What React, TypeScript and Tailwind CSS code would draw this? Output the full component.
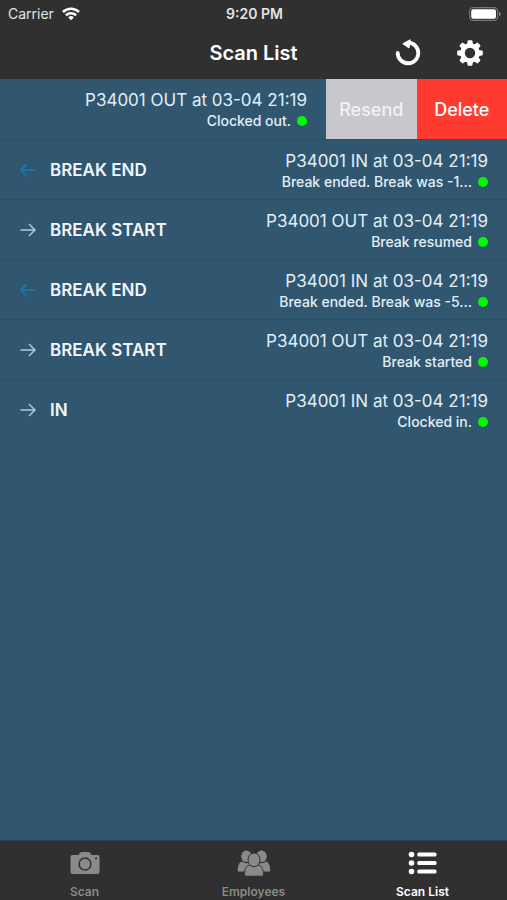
import clsx from 'clsx';

interface ScanEntry {
  id: number;
  label: string;
  direction: 'in' | 'out';
  title: string;
  status: string;
}

const scans: ScanEntry[] = [
  { id: 5, label: 'BREAK END', direction: 'in', title: 'P34001 IN at 03-04 21:19', status: 'Break ended. Break was -1...' },
  { id: 4, label: 'BREAK START', direction: 'out', title: 'P34001 OUT at 03-04 21:19', status: 'Break resumed' },
  { id: 3, label: 'BREAK END', direction: 'in', title: 'P34001 IN at 03-04 21:19', status: 'Break ended. Break was -5...' },
  { id: 2, label: 'BREAK START', direction: 'out', title: 'P34001 OUT at 03-04 21:19', status: 'Break started' },
  { id: 1, label: 'IN', direction: 'out', title: 'P34001 IN at 03-04 21:19', status: 'Clocked in.' },
];

const teeth = [0, 45, 90, 135, 180, 225, 270, 315];

function WifiIcon() {
  return (
    <svg width="18" height="14" viewBox="0 0 18 14" fill="none" stroke="#fff" strokeWidth="2.5" aria-hidden="true">
      <path d="M1 5a11.3 11.3 0 0 1 16 0" />
      <path d="M3.9 8.3a7.2 7.2 0 0 1 10.2 0" />
      <path d="M9 13.2 6.2 10.4a4 4 0 0 1 5.6 0z" fill="#fff" stroke="none" />
    </svg>
  );
}

function BatteryIcon() {
  return (
    <svg width="32" height="14" viewBox="0 0 32 14" aria-hidden="true">
      <rect x="0.6" y="0.6" width="28" height="12.8" rx="3.6" fill="none" stroke="#777" strokeWidth="1.1" />
      <rect x="2.2" y="2.2" width="24.8" height="9.6" rx="2" fill="#fff" />
      <path d="M30 4.8c1.2.5 1.6 1.2 1.6 2.2s-.4 1.7-1.6 2.2z" fill="#8b8b8b" />
    </svg>
  );
}

function ReloadIcon() {
  return (
    <svg width="28" height="28" viewBox="0 0 28 28" aria-hidden="true">
      <path d="M3.7 14A10.3 10.3 0 1 0 15 3.7" fill="none" stroke="#fff" strokeWidth="3.8" strokeLinecap="round" />
      <path d="M8.8 4.7 16.2.8 15 9z" fill="#fff" stroke="#fff" strokeWidth="1" strokeLinejoin="round" />
    </svg>
  );
}

function GearIcon() {
  return (
    <svg width="28" height="28" viewBox="0 0 28 28" aria-hidden="true">
      <circle cx="14" cy="14" r="7.5" fill="none" stroke="#fff" strokeWidth="4.6" />
      {teeth.map((angle) => (
        <path
          key={angle}
          d="M11 5.5 11.5 2.2q.1-1 1-1h3q.9 0 1 1l.5 3.3z"
          fill="#fff"
          transform={`rotate(${angle} 14 14)`}
        />
      ))}
    </svg>
  );
}

function CameraIcon() {
  return (
    <svg width="30" height="24" viewBox="0 0 30 24" aria-hidden="true">
      <path
        d="M2.5 4h6l1.6-2.2Q10.700 1 11.700 1h6.600q1 0 1.600.8L21.500 4h6q2 0 2 2v15q0 2-2 2h-25q-2 0-2-2V6q0-2 2-2z"
        fill="currentColor"
      />
      <circle cx="15" cy="13" r="5.9" fill="none" stroke="#303030" strokeWidth="1.5" />
      <circle cx="26" cy="7.4" r="1.1" fill="#303030" />
    </svg>
  );
}

function PeopleIcon() {
  return (
    <svg width="34" height="26" viewBox="0 0 34 26" fill="currentColor" aria-hidden="true">
      <ellipse cx="9.4" cy="6.3" rx="5.2" ry="5.8" />
      <ellipse cx="24.6" cy="6.3" rx="5.2" ry="5.8" />
      <path d="M.8 21.500c0-6 1.200-8.700 4.200-9.900 2.500 2 5.500 2 8 .9v9z" />
      <path d="M33.200 21.500c0-6-1.200-8.700-4.200-9.900-2.500 2-5.500 2-8 .9v9z" />
      <g stroke="#303030" strokeWidth="1">
        <path d="M7.500 26.200c0-7 1.300-10 4.800-11h9.400c3.500 1 4.800 4 4.800 11z" />
        <ellipse cx="17" cy="9.8" rx="6" ry="6.900" />
      </g>
    </svg>
  );
}

function ListIcon() {
  return (
    <svg width="30" height="24" viewBox="0 0 30 24" fill="currentColor" aria-hidden="true">
      {[3.5, 12, 20.5].map((y) => (
        <g key={y}>
          <circle cx="3.5" cy={y} r="2.8" />
          <rect x="9.3" y={y - 1.9} width="19.2" height="3.8" rx="1.5" />
        </g>
      ))}
    </svg>
  );
}

function DirectionArrow({ direction }: { direction: 'in' | 'out' }) {
  return (
    <svg
      width="16"
      height="16"
      viewBox="0 0 16 16"
      fill="none"
      strokeWidth="1.5"
      className={direction === 'in' ? 'stroke-[#127db8]' : 'stroke-[#a5cbe2]'}
      aria-hidden="true"
    >
      {direction === 'in' ? <path d="M15.5 8H1.2M7 2 1 8l6 6" /> : <path d="M.5 8h14.3M9 2l6 6-6 6" />}
    </svg>
  );
}

function ScanDetails({ title, status }: { title: string; status: string }) {
  return (
    <div className="flex flex-col items-end whitespace-nowrap">
      <p className="text-[17px] leading-6 text-[#e3eef8]">{title}</p>
      <p className="flex items-center gap-[6px] text-[14px] leading-[18px] font-medium text-[#e3eef8]">
        {status}
        <span className="size-[10px] rounded-full bg-[#00fb00]" />
      </p>
    </div>
  );
}

const tabs = [
  { name: 'Scan', Icon: CameraIcon },
  { name: 'Employees', Icon: PeopleIcon },
  { name: 'Scan List', Icon: ListIcon },
];

export default function App() {
  const active = 'Scan List';

  return (
    <div className="flex min-h-screen flex-col bg-[#30576f] font-[Inter,sans-serif]">
      <header className="bg-[#303030] text-white">
        <div className="grid h-[27px] grid-cols-[1fr_auto_1fr] items-center pr-[6px] pl-2 text-[14px] text-[#e4e4e4]">
          <div className="flex items-center gap-2">
            Carrier
            <WifiIcon />
          </div>
          <time className="text-center font-semibold">9:20 PM</time>
          <div className="flex justify-end">
            <BatteryIcon />
          </div>
        </div>
        <div className="grid h-[52px] grid-cols-[1fr_auto_1fr] items-center px-[23px]">
          <h1 className="col-start-2 text-[20px] font-semibold">Scan List</h1>
          <div className="flex justify-end gap-[34px]">
            <button type="button" aria-label="Reload">
              <ReloadIcon />
            </button>
            <button type="button" aria-label="Settings">
              <GearIcon />
            </button>
          </div>
        </div>
      </header>

      <main className="flex-1">
        <ul>
          <li className="flex h-[60px]">
            <div className="flex flex-1 items-center justify-end pr-[19px]">
              <ScanDetails title="P34001 OUT at 03-04 21:19" status="Clocked out." />
            </div>
            <div className="flex w-[181px] text-[18px] font-medium">
              <button type="button" className="flex-1 bg-[#c7c7cc] text-[#f2f2f5]">
                Resend
              </button>
              <button type="button" className="flex-1 bg-[#ff3b30] text-white">
                Delete
              </button>
            </div>
          </li>
          {scans.map((scan) => (
            <li
              key={scan.id}
              className="flex h-[60px] items-center justify-between border-t border-[#294e66] pr-[19px] pl-5"
            >
              <div className="flex items-center gap-[14px]">
                <DirectionArrow direction={scan.direction} />
                <span className="text-[17px] leading-6 font-semibold text-[#f0f6fc]">{scan.label}</span>
              </div>
              <ScanDetails title={scan.title} status={scan.status} />
            </li>
          ))}
        </ul>
      </main>

      <nav className="grid h-[60px] grid-cols-3 border-t border-[#28404e] bg-[#303030]">
        {tabs.map(({ name, Icon }) => (
          <button
            key={name}
            type="button"
            className={clsx(
              'flex flex-col items-center justify-end gap-2 text-[12px] leading-4 font-semibold',
              name === active ? 'text-white' : 'text-[#8a8a8a]'
            )}
          >
            <span className="flex h-[26px] items-center">
              <Icon />
            </span>
            {name}
          </button>
        ))}
      </nav>
    </div>
  );
}
